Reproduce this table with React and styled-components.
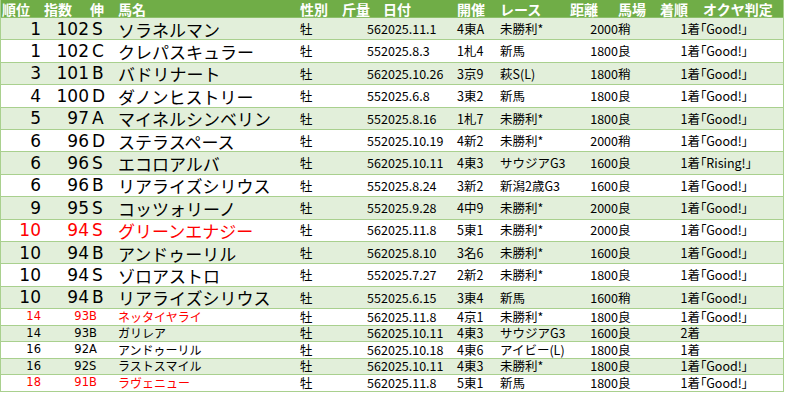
import React from 'react';
import styled, { createGlobalStyle } from 'styled-components';

const GlobalStyle = createGlobalStyle`
  html, body {
    margin: 0;
    padding: 0;
    background: #ffffff;
  }
  body {
    font-family: "Noto Sans CJK JP", "Noto Sans", sans-serif;
    color: #000;
  }
`;

const COLUMNS = '43px 45px 27px 182px 42px 41px 74px 43px 72px 48px 42px 40px 1fr';

const Table = styled.div`
  width: 784px;
  box-sizing: border-box;
  border-left: 1px solid #a9d08e;
  border-right: 1px solid #a9d08e;
`;

const HeaderRow = styled.div`
  display: grid;
  grid-template-columns: ${COLUMNS};
  height: 18px;
  background: #70ad47;
  border-bottom: 1px solid #8cbf6a;
  box-sizing: border-box;
`;

const HeadCell = styled.div`
  display: flex;
  align-items: center;
  padding-left: ${p => p.$pl ?? 1}px;
  font-size: 14px;
  font-weight: 700;
  color: #ffffff;
  white-space: nowrap;
  line-height: 1;
`;

const Row = styled.div`
  display: grid;
  grid-template-columns: ${COLUMNS};
  height: ${p => (p.$small ? '16.5px' : '22.4px')};
  background: ${p => (p.$alt ? '#e2efda' : '#ffffff')};
  border-bottom: 1px solid #a9d08e;
  box-sizing: border-box;
`;

const Cell = styled.div`
  display: flex;
  align-items: center;
  justify-content: ${p => (p.$right ? 'flex-end' : 'flex-start')};
  padding-left: ${p => p.$pl || 0}px;
  padding-right: ${p => p.$pr || 0}px;
  padding-top: ${p => (p.$small ? 0 : 1)}px;
  font-family: ${p => (p.$num ? '"DejaVu Sans", "Noto Sans CJK JP", sans-serif' : 'inherit')};
  font-size: ${p => p.$size}px;
  color: ${p => (p.$red ? '#ff0000' : '#000000')};
  white-space: nowrap;
  line-height: 1;
  min-width: 0;
`;

const Judge = styled.span`
  font-feature-settings: "palt";
`;

const headers = [
  { t: '順位', pl: 1 },
  { t: '指数', pl: 0 },
  { t: '伸', pl: 1 },
  { t: '馬名', pl: 2 },
  { t: '性別', pl: 2 },
  { t: '斤量', pl: 2 },
  { t: '日付', pl: 2 },
  { t: '開催', pl: 2 },
  { t: 'レース', pl: 2 },
  { t: '距離', pl: 0 },
  { t: '馬場', pl: 0 },
  { t: '着順', pl: 0 },
  { t: 'オクヤ判定', pl: 3 },
];

const rows = [
  ['1', '102', 'S', 'ソラネルマン', '56', '2025.11.1', '4東A', '未勝利*', '2000', '稍', '1着', '「Good!」'],
  ['1', '102', 'C', 'クレパスキュラー', '55', '2025.8.3', '1札4', '新馬', '1800', '良', '1着', '「Good!」'],
  ['3', '101', 'B', 'バドリナート', '56', '2025.10.26', '3京9', '萩S(L)', '1800', '稍', '1着', '「Good!」'],
  ['4', '100', 'D', 'ダノンヒストリー', '55', '2025.6.8', '3東2', '新馬', '1800', '良', '1着', '「Good!」'],
  ['5', '97', 'A', 'マイネルシンベリン', '55', '2025.8.16', '1札7', '未勝利*', '1800', '良', '1着', '「Good!」'],
  ['6', '96', 'D', 'ステラスペース', '55', '2025.10.19', '4新2', '未勝利*', '2000', '稍', '1着', '「Good!」'],
  ['6', '96', 'S', 'エコロアルバ', '56', '2025.10.11', '4東3', 'サウジアG3', '1600', '良', '1着', '「Rising!」'],
  ['6', '96', 'B', 'リアライズシリウス', '55', '2025.8.24', '3新2', '新潟2歳G3', '1600', '良', '1着', '「Good!」'],
  ['9', '95', 'S', 'コッツォリーノ', '55', '2025.9.28', '4中9', '未勝利*', '2000', '良', '1着', '「Good!」'],
  ['10', '94', 'S', 'グリーンエナジー', '56', '2025.11.8', '5東1', '未勝利*', '2000', '良', '1着', '「Good!」', 'red'],
  ['10', '94', 'B', 'アンドゥーリル', '56', '2025.8.10', '3名6', '未勝利*', '1600', '良', '1着', '「Good!」'],
  ['10', '94', 'S', 'ゾロアストロ', '55', '2025.7.27', '2新2', '未勝利*', '1800', '良', '1着', '「Good!」'],
  ['10', '94', 'B', 'リアライズシリウス', '55', '2025.6.15', '3東4', '新馬', '1600', '稍', '1着', '「Good!」'],
  ['14', '93', 'B', 'ネッタイヤライ', '56', '2025.11.8', '4京1', '未勝利*', '1800', '良', '1着', '「Good!」', 'red', 'small'],
  ['14', '93', 'B', 'ガリレア', '56', '2025.10.11', '4東3', 'サウジアG3', '1600', '良', '2着', '', '', 'small'],
  ['16', '92', 'A', 'アンドゥーリル', '56', '2025.10.18', '4東6', 'アイビー(L)', '1800', '良', '1着', '', '', 'small'],
  ['16', '92', 'S', 'ラストスマイル', '56', '2025.10.11', '4東3', '未勝利*', '1800', '良', '1着', '「Good!」', '', 'small'],
  ['18', '91', 'B', 'ラヴェニュー', '56', '2025.11.8', '5東1', '新馬', '1800', '良', '1着', '「Good!」', 'red', 'small'],
];

function HorseRow({ data, alt }) {
  const [rank, index, grade, name, weight, date, venue, race, dist, going, finish, judge, color, size] = data;
  const small = size === 'small';
  const red = color === 'red';
  const big = small ? 11.5 : 17;
  const nameSize = small ? 12 : 17;
  const mid = 12.5;
  return (
    <Row $alt={alt} $small={small}>
      <Cell $num $right $pr={3} $size={big} $red={red} $small={small}>{rank}</Cell>
      <Cell $num $right $pr={0} $size={big} $red={red} $small={small}>{index}</Cell>
      <Cell $num $pl={small ? 0 : 3} $size={big} $red={red} $small={small}>{grade}</Cell>
      <Cell $pl={2} $size={nameSize} $red={red} $small={small}>{name}</Cell>
      <Cell $pl={2} $size={mid} $small={small}>牡</Cell>
      <Cell $right $size={mid} $small={small}>{weight}</Cell>
      <Cell $size={mid} $small={small}>{date}</Cell>
      <Cell $pl={2} $size={mid} $small={small}>{venue}</Cell>
      <Cell $pl={2} $size={mid} $small={small}>{race}</Cell>
      <Cell $right $size={mid} $small={small}>{dist}</Cell>
      <Cell $size={mid} $small={small}>{going}</Cell>
      <Cell $right $size={mid} $small={small}>{finish}</Cell>
      <Cell $size={mid} $small={small}><Judge>{judge}</Judge></Cell>
    </Row>
  );
}

export default function App() {
  return (
    <>
      <GlobalStyle />
      <Table>
        <HeaderRow>
          {headers.map(h => (
            <HeadCell key={h.t} $pl={h.pl}>{h.t}</HeadCell>
          ))}
        </HeaderRow>
        {rows.map((r, i) => (
          <HorseRow key={i} data={r} alt={i % 2 === 0} />
        ))}
      </Table>
    </>
  );
}
